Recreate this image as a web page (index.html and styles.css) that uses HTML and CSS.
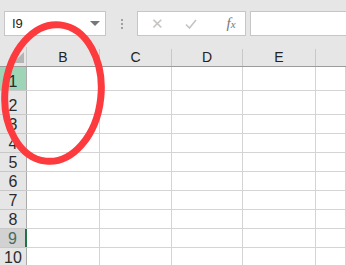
FILE: index.html
```html
<!DOCTYPE html>
<html lang="zh-cn">
<head>
    <meta charset="UTF-8">
    <title>Sheet</title>
    <link rel="stylesheet" href="styles.css">
</head>
<body>
    <div class="toolbar">
        <div class="namebox">
            <span>I9</span>
            <span class="arrow"></span>
        </div>
        <div class="dots"><i></i><i></i><i></i></div>
        <div class="fbtns">
            <span class="btn cancel">✕</span>
            <span class="btn ok">
                <svg width="12" height="10" viewBox="0 0 12 10"><path d="M1 5.5 L4.5 9 L11 1" fill="none" stroke="#c4c4c4" stroke-width="1.6"/></svg>
            </span>
            <span class="btn fx">f<small>x</small></span>
        </div>
        <div class="finput"></div>
    </div>

    <div class="sheet">
        <div class="row head">
            <div class="corner"><span></span></div>
            <div class="col">B</div>
            <div class="col">C</div>
            <div class="col">D</div>
            <div class="col">E</div>
            <div class="col last"></div>
        </div>
        <div class="row tall"><div class="num sel">1</div><div></div><div></div><div></div><div></div><div></div></div>
        <div class="row tall"><div class="num">2</div><div></div><div></div><div></div><div></div><div></div></div>
        <div class="row"><div class="num">3</div><div></div><div></div><div></div><div></div><div></div></div>
        <div class="row"><div class="num">4</div><div></div><div></div><div></div><div></div><div></div></div>
        <div class="row"><div class="num">5</div><div></div><div></div><div></div><div></div><div></div></div>
        <div class="row"><div class="num">6</div><div></div><div></div><div></div><div></div><div></div></div>
        <div class="row"><div class="num">7</div><div></div><div></div><div></div><div></div><div></div></div>
        <div class="row"><div class="num">8</div><div></div><div></div><div></div><div></div><div></div></div>
        <div class="row"><div class="num cur">9</div><div></div><div></div><div></div><div></div><div></div></div>
        <div class="row"><div class="num">10</div><div></div><div></div><div></div><div></div><div></div></div>
    </div>

    <!-- marca vermelha desenhada por cima -->
    <svg class="mark" width="346" height="265">
        <ellipse cx="53" cy="93" rx="48" ry="68.5" transform="rotate(6 53 93)" fill="none" stroke="#fd3a3d" stroke-width="7"/>
    </svg>
</body>
</html>
```

FILE: styles.css
```css
* {
    margin: 0;
    padding: 0;
    box-sizing: border-box;
}

body {
    width: 346px;
    height: 265px;
    overflow: hidden;
    background: #fff;
    font-family: 'Liberation Sans', Arial, sans-serif;
    color: #222;
    position: relative;
}

/* barra de fórmulas */
.toolbar {
    height: 47px;
    background: #e6e6e6;
    display: flex;
    align-items: flex-start;
    padding: 11px 0 0 4px;
}

.namebox {
    width: 102px;
    height: 25px;
    background: #fff;
    border: 1px solid #c6c6c6;
    display: flex;
    align-items: center;
    justify-content: space-between;
    padding: 0 5px 0 7px;
    font-size: 13px;
}

.arrow {
    width: 0;
    height: 0;
    border-left: 5px solid transparent;
    border-right: 5px solid transparent;
    border-top: 5px solid #777;
}

.dots {
    width: 31px;
    height: 25px;
    display: flex;
    flex-direction: column;
    align-items: center;
    justify-content: center;
    gap: 2px;
}

.dots i {
    width: 2px;
    height: 2px;
    background: #a0a0a0;
}

.fbtns {
    width: 109px;
    height: 25px;
    background: #fff;
    border: 1px solid #c6c6c6;
    display: flex;
    align-items: center;
}

.btn {
    width: 36px;
    text-align: center;
    color: #c4c4c4;
}

.cancel {
    font-size: 15px;
    padding-left: 4px;
}

.ok svg {
    display: block;
    margin: 0 auto;
}

.fx {
    font-family: 'Liberation Serif', serif;
    font-style: italic;
    font-size: 15px;
    color: #777;
    padding-left: 8px;
}

.fx small {
    font-size: 11px;
}

.finput {
    flex: 1;
    height: 25px;
    margin-left: 4px;
    background: #fff;
    border: 1px solid #c6c6c6;
    border-right: none;
}

/* planilha */
.row {
    display: grid;
    grid-template-columns: 27px 73px 72px 71px 73px 1fr;
    height: 19px;
    border-bottom: 1px solid #d4d4d4;
}

.row.tall {
    height: 24px;
}

.row > div {
    border-right: 1px solid #d4d4d4;
}

.row.head {
    height: 20px;
    background: #e6e6e6;
    border-bottom: 1px solid #9b9b9b;
}

.head .col {
    font-size: 14px;
    text-align: center;
    border-right: 1px solid #c8c8c8;
    margin-top: 2px;
    line-height: 17px;
}

.head .last {
    border-right: none;
}

.corner {
    position: relative;
    border-right: 1px solid #c8c8c8 !important;
}

.corner span {
    position: absolute;
    right: 2px;
    bottom: 3px;
    width: 0;
    height: 0;
    border-left: 11px solid transparent;
    border-bottom: 11px solid #b4b4b4;
}

.num {
    background: #e6e6e6;
    border-right: 1px solid #ababab !important;
    font-size: 16px;
    text-align: center;
    display: flex;
    align-items: flex-end;
    justify-content: center;
    line-height: 17px;
    color: #2b2b2b;
    box-shadow: 0 1px 0 #c8c8c8;
}

.num.sel {
    background: #9fd5b7;
}

.num.cur {
    background: #d2d2d2;
    border-right: 2px solid #217346 !important;
    color: #4a6a60;
}

.mark {
    position: absolute;
    left: 0;
    top: 0;
    pointer-events: none;
}
```
